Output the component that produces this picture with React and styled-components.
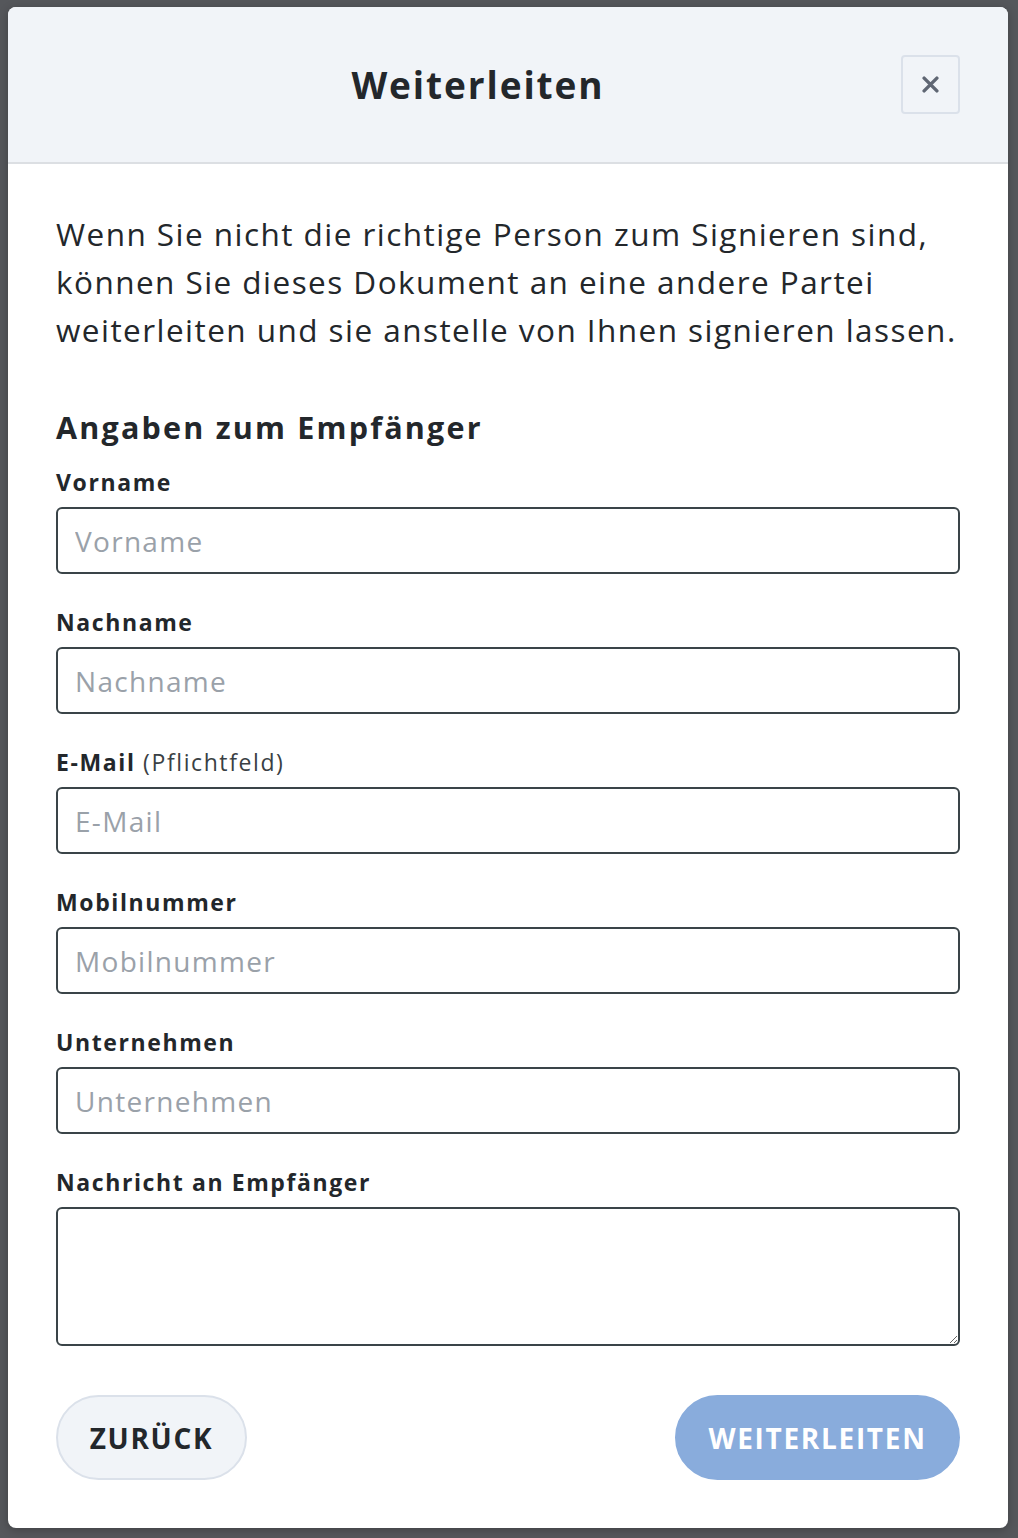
import React from "react"
import styled, { createGlobalStyle } from "styled-components"

const Global = createGlobalStyle`
  html, body {
    margin: 0;
    padding: 0;
    background: #55575b;
  }
  body {
    font-family: "Open Sans", "Liberation Sans", sans-serif;
    color: #23272b;
  }
`

const Backdrop = styled.div`
  min-height: 1538px;
  padding: 7px 10px 0 8px;
  box-sizing: border-box;
`

const Modal = styled.div`
  width: 1000px;
  background: #fff;
  border-radius: 8px;
  overflow: hidden;
  box-shadow: 0 2px 10px rgba(0, 0, 0, 0.25);
`

const Header = styled.div`
  height: 155px;
  background: #f1f4f8;
  border-bottom: 2px solid #dcdfe3;
  display: flex;
  align-items: center;
  justify-content: center;
  position: relative;
`

const Title = styled.h2`
  margin: 0 0 0 -60px;
  font-size: 37px;
  font-weight: 700;
  letter-spacing: 1.9px;
  color: #23272b;
`

const CloseButton = styled.button`
  position: absolute;
  right: 48px;
  top: 48px;
  width: 59px;
  height: 59px;
  border: 2px solid #dbe1ea;
  border-radius: 4px;
  background: transparent;
  display: flex;
  align-items: center;
  justify-content: center;
  padding: 0;
`

const Body = styled.div`
  padding: 46px 48px 48px 48px;
`

const Intro = styled.p`
  margin: 0;
  font-size: 31.5px;
  line-height: 48px;
  letter-spacing: 1.45px;
  color: #23272b;
`

const SectionTitle = styled.h3`
  margin: 55px 0 0;
  font-size: 30.5px;
  line-height: 36px;
  font-weight: 700;
  letter-spacing: 2.2px;
`

const Field = styled.div`
  margin-top: ${({ first }) => (first ? "23px" : "34px")};
`

const Label = styled.label`
  display: block;
  font-size: 23px;
  line-height: 28px;
  font-weight: 700;
  letter-spacing: 1.6px;
  margin-bottom: 11px;
  color: #23272b;
`

const Hint = styled.span`
  font-weight: 400;
  color: #3a3f44;
`

const Input = styled.input`
  display: block;
  width: 100%;
  box-sizing: border-box;
  height: 67px;
  border: 2px solid #3a4448;
  border-radius: 6px;
  padding: 0 17px;
  font-family: inherit;
  font-size: 28px;
  letter-spacing: 1.3px;
  color: #23272b;
  outline: none;
  &::placeholder {
    color: #9aa1a9;
  }
`

const TextArea = styled.textarea`
  display: block;
  width: 100%;
  box-sizing: border-box;
  height: 139px;
  border: 2px solid #3a4448;
  border-radius: 6px;
  padding: 12px 17px;
  font-family: inherit;
  font-size: 28px;
  outline: none;
`

const Actions = styled.div`
  margin-top: 49px;
  display: flex;
  justify-content: space-between;
  align-items: center;
`

const PillButton = styled.button`
  height: 85px;
  border-radius: 43px;
  padding: 0 30px;
  font-family: inherit;
  font-size: 28px;
  font-weight: 700;
  letter-spacing: 1.7px;
  text-transform: uppercase;
  border: 2px solid ${({ primary }) => (primary ? "#89acdc" : "#dbe1ea")};
  background: ${({ primary }) => (primary ? "#89acdc" : "#f1f4f8")};
  color: ${({ primary }) => (primary ? "#fff" : "#23272b")};
  min-width: ${({ primary }) => (primary ? "285px" : "191px")};
`

const fields = [
  { label: "Vorname", placeholder: "Vorname" },
  { label: "Nachname", placeholder: "Nachname" },
  { label: "E-Mail", hint: "(Pflichtfeld)", placeholder: "E-Mail" },
  { label: "Mobilnummer", placeholder: "Mobilnummer" },
  { label: "Unternehmen", placeholder: "Unternehmen" },
]

export default function App() {
  return (
    <>
      <Global />
      <Backdrop>
        <Modal>
          <Header>
            <Title>Weiterleiten</Title>
            <CloseButton aria-label="Schließen">
              <svg width="17" height="17" viewBox="0 0 16 16">
                <path d="M2 2 L14 14 M14 2 L2 14" stroke="#5f6673" strokeWidth="3.2" strokeLinecap="round" />
              </svg>
            </CloseButton>
          </Header>
          <Body>
            <Intro>
              Wenn Sie nicht die richtige Person zum Signieren sind, können Sie dieses Dokument an eine andere Partei weiterleiten und sie anstelle von Ihnen signieren lassen.
            </Intro>
            <SectionTitle>Angaben zum Empfänger</SectionTitle>
            {fields.map((f, i) => (
              <Field key={f.label} first={i === 0}>
                <Label>
                  {f.label}
                  {f.hint && <Hint> {f.hint}</Hint>}
                </Label>
                <Input placeholder={f.placeholder} />
              </Field>
            ))}
            <Field>
              <Label>Nachricht an Empfänger</Label>
              <TextArea />
            </Field>
            <Actions>
              <PillButton>Zurück</PillButton>
              <PillButton primary>Weiterleiten</PillButton>
            </Actions>
          </Body>
        </Modal>
      </Backdrop>
    </>
  )
}
